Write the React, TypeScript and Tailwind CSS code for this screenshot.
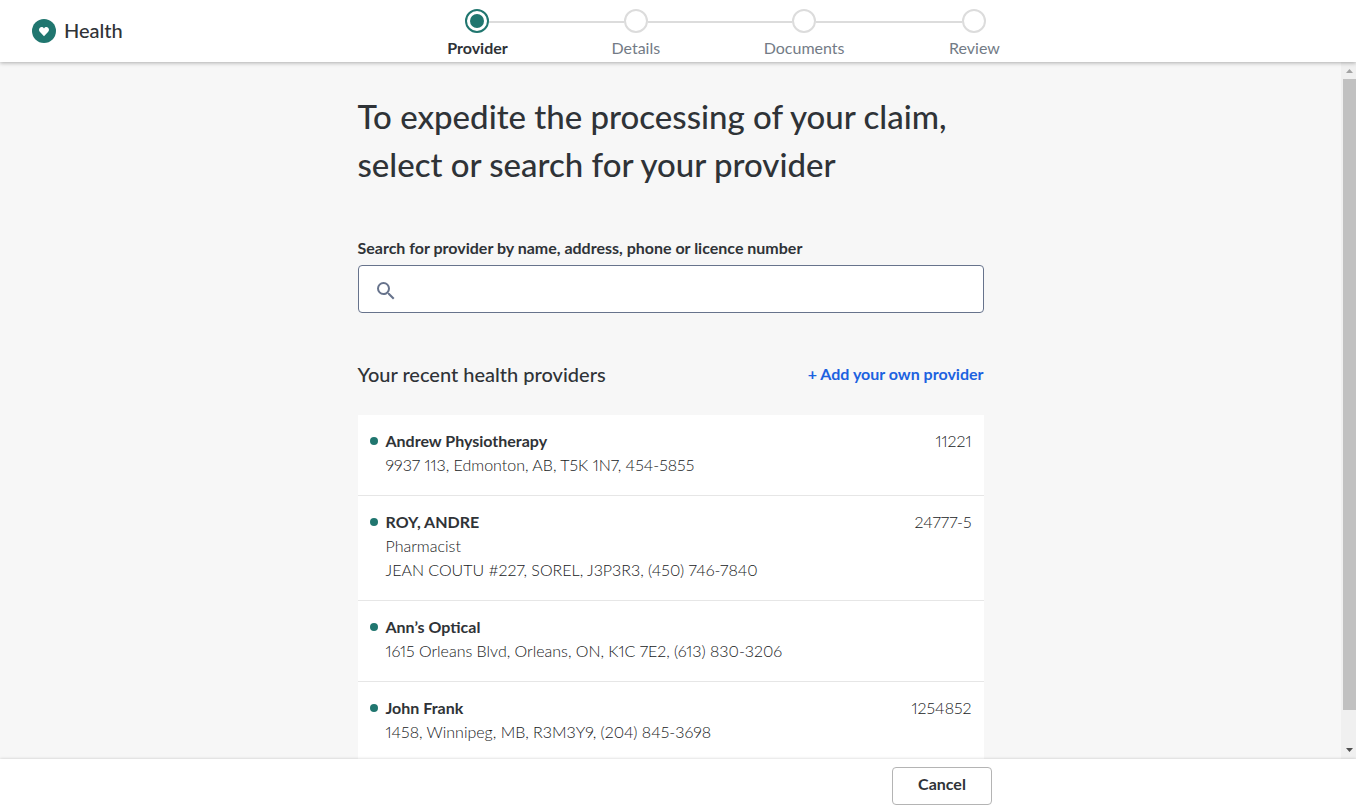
import { useState } from "react";
import { MdSearch } from "react-icons/md";

type Provider = {
  name: string;
  licence?: string;
  role?: string;
  address: string;
};

const STEPS = [
  { label: "Provider", width: "w-[60px]" },
  { label: "Details", width: "w-12" },
  { label: "Documents", width: "w-20" },
  { label: "Review", width: "w-[52px]" },
];

const PROVIDERS: Provider[] = [
  {
    name: "Andrew Physiotherapy",
    licence: "11221",
    address: "9937 113, Edmonton, AB, T5K 1N7, 454-5855",
  },
  {
    name: "ROY, ANDRE",
    licence: "24777-5",
    role: "Pharmacist",
    address: "JEAN COUTU #227, SOREL, J3P3R3, (450) 746-7840",
  },
  {
    name: "Ann’s Optical",
    address: "1615 Orleans Blvd, Orleans, ON, K1C 7E2, (613) 830-3206",
  },
  {
    name: "John Frank",
    licence: "1254852",
    address: "1458, Winnipeg, MB, R3M3Y9, (204) 845-3698",
  },
];

function Logo() {
  return (
    <svg className="size-6 shrink-0" viewBox="0 0 24 24" aria-hidden="true">
      <circle cx="12" cy="12" r="12" fill="#20766f" />
      <path
        fill="#fff"
        d="M12 17.2 8 13C6.7 11.6 6.700 9.700 7.900 8.700c1.200-1 3.100-.7 4.100.8 1-1.500 2.900-1.800 4.100-.8 1.200 1 1.200 2.900-.1 4.300z"
      />
    </svg>
  );
}

function Stepper({ current }: { current: number }) {
  return (
    <ol className="flex">
      {STEPS.map((step, i) => {
        const active = i === current;
        const last = i === STEPS.length - 1;
        return (
          <li
            key={step.label}
            className={last ? "flex" : "flex flex-auto"}
            aria-current={active ? "step" : undefined}
          >
            <div className={`${step.width} shrink-0`}>
              <div className="flex">
                <span className={`mt-3 h-0.5 flex-1 ${i === 0 ? "" : "bg-[#dcdcdc]"}`} />
                <span
                  className={`flex size-6 items-center justify-center rounded-full border-2 bg-white ${
                    active ? "border-[#20766f]" : "border-[#dcdcdc]"
                  }`}
                >
                  {active ? (
                    <span className="size-3.5 rounded-full bg-[#20766f]" />
                  ) : null}
                </span>
                <span className={`mt-3 h-0.5 flex-1 ${last ? "" : "bg-[#dcdcdc]"}`} />
              </div>
              <div
                className={`mt-[3px] flex justify-center text-base leading-6 whitespace-nowrap ${
                  active ? "font-bold text-[#2f3337]" : "text-[#737b86]"
                }`}
              >
                {step.label}
              </div>
            </div>
            {last ? null : <span className="mt-3 h-0.5 flex-1 bg-[#dcdcdc]" />}
          </li>
        );
      })}
    </ol>
  );
}

function ProviderRow({ provider }: { provider: Provider }) {
  return (
    <li className="flex border-b border-[#e6e6e6] px-3 pt-3.5 pb-[18px] leading-6 font-light text-[#17191b] proportional-nums">
      <span className="mt-2 mr-2 size-2 shrink-0 rounded-full bg-[#20766f]" />
      <div className="flex-1">
        <p className="font-bold text-[#2f3337]">{provider.name}</p>
        {provider.role ? <p>{provider.role}</p> : null}
        <p>{provider.address}</p>
      </div>
      {provider.licence ? <p>{provider.licence}</p> : null}
    </li>
  );
}

function Scrollbar() {
  return (
    <div
      className="flex w-[15px] shrink-0 flex-col items-end bg-[#f0f0f0]"
      aria-hidden="true"
    >
      <svg className="h-[17px] w-[13px] shrink-0" viewBox="0 0 13 17">
        <path d="M3 11 6.500 7 10 11z" fill="#a3a3a3" />
      </svg>
      <div className="w-[13px] flex-1 bg-[#c1c1c1]" />
      <div className="h-8 shrink-0" />
      <svg className="h-[17px] w-[13px] shrink-0" viewBox="0 0 13 17">
        <path d="M3 6 6.500 10 10 6z" fill="#505050" />
      </svg>
    </div>
  );
}

export default function App() {
  const [query, setQuery] = useState("");

  return (
    <div className="flex h-screen flex-col bg-[#f7f7f7] font-[Lato,sans-serif] text-base text-[#2f3337]">
      <header className="relative grid shrink-0 grid-cols-[33%_553px_1fr] bg-white pt-[9px] pb-0.5 shadow-[0_1px_4px_rgba(0,0,0,0.3)]">
        <div className="flex items-center gap-2 pb-[7px] pl-8">
          <Logo />
          <span className="pb-0.5 text-xl leading-6 font-medium">Health</span>
        </div>
        <Stepper current={0} />
      </header>

      <div className="flex min-h-0 flex-1">
        <main className="min-w-0 flex-1 overflow-hidden">
          <div className="mx-auto max-w-[626px] pt-[30px]">
            <h1 className="text-[33px] leading-[48px] font-medium">
              To expedite the processing of your claim, select or search for
              your provider
            </h1>

            <label htmlFor="provider-search" className="mt-12 block leading-6 font-bold">
              Search for provider by name, address, phone or licence number
            </label>
            <div className="mt-[5px] flex h-12 items-center rounded-[4px] border border-[#67738c] bg-white pl-[15px]">
              <MdSearch className="mt-1 size-6 text-[#67738c]" aria-hidden="true" />
              <input
                id="provider-search"
                type="text"
                value={query}
                onChange={(e) => setQuery(e.target.value)}
                className="h-full min-w-0 flex-1 px-3 outline-none"
              />
            </div>

            <div className="mt-[47px] flex items-center justify-between">
              <h2 className="text-xl leading-7 font-medium">
                Your recent health providers
              </h2>
              <a href="#add-provider" className="leading-6 font-bold text-[#1c62e0]">
                + Add your own provider
              </a>
            </div>

            <ul className="mt-[27px] bg-white">
              {PROVIDERS.map((p) => (
                <ProviderRow key={p.name} provider={p} />
              ))}
            </ul>
          </div>
        </main>
        <Scrollbar />
      </div>

      <footer className="relative shrink-0 bg-white pt-2 pb-1.5 shadow-[0_0_3px_rgba(0,0,0,0.2)]">
        <div className="mx-auto flex max-w-[628px] justify-end">
          <button
            type="button"
            className="h-[38px] w-[100px] rounded-[4px] border border-[#b4b4b4] pb-1 font-bold"
          >
            Cancel
          </button>
        </div>
      </footer>
    </div>
  );
}
